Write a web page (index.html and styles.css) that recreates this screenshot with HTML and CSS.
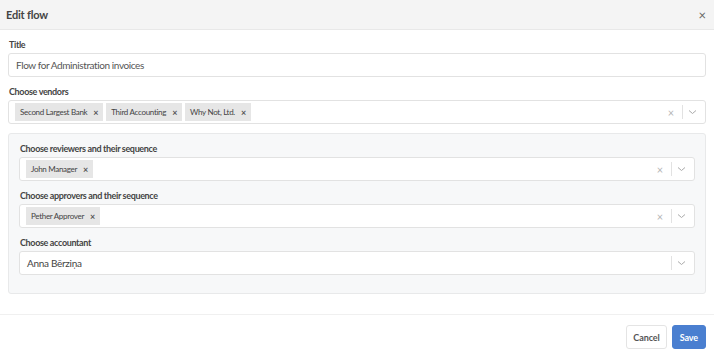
FILE: index.html
```html
<!DOCTYPE html>
<html>

<head>
  <meta charset="utf-8" />
  <title>Edit flow</title>
  <link rel="stylesheet" href="styles.css">
</head>

<body>
  <div class="modal">
    <div class="modal-header">
      <h1>Edit flow</h1>
      <span class="close">&times;</span>
    </div>

    <div class="modal-body">
      <div class="field">
        <label>Title</label>
        <div class="input">Flow for Administration invoices</div>
      </div>

      <div class="field">
        <label>Choose vendors</label>
        <div class="select">
          <div class="values">
            <span class="tag">Second Largest Bank<b>&times;</b></span>
            <span class="tag">Third Accounting<b>&times;</b></span>
            <span class="tag">Why Not, Ltd.<b>&times;</b></span>
          </div>
          <span class="clear">&times;</span>
          <span class="sep"></span>
          <span class="chevron"><svg width="9" height="6" viewBox="0 0 9 6"><path d="M1 1.5l3.5 3 3.5-3" fill="none" stroke="#aaa" stroke-width="1"/></svg></span>
        </div>
      </div>

      <div class="panel">
        <div class="field">
          <label>Choose reviewers and their sequence</label>
          <div class="select">
            <div class="values">
              <span class="tag">John Manager<b>&times;</b></span>
            </div>
            <span class="clear">&times;</span>
            <span class="sep"></span>
            <span class="chevron"><svg width="9" height="6" viewBox="0 0 9 6"><path d="M1 1.5l3.5 3 3.5-3" fill="none" stroke="#aaa" stroke-width="1"/></svg></span>
          </div>
        </div>

        <div class="field">
          <label>Choose approvers and their sequence</label>
          <div class="select">
            <div class="values">
              <span class="tag">Pether Approver<b>&times;</b></span>
            </div>
            <span class="clear">&times;</span>
            <span class="sep"></span>
            <span class="chevron"><svg width="9" height="6" viewBox="0 0 9 6"><path d="M1 1.5l3.5 3 3.5-3" fill="none" stroke="#aaa" stroke-width="1"/></svg></span>
          </div>
        </div>

        <div class="field">
          <label>Choose accountant</label>
          <div class="select">
            <div class="values single">Anna Bērziņa</div>
            <span class="sep"></span>
            <span class="chevron"><svg width="9" height="6" viewBox="0 0 9 6"><path d="M1 1.5l3.5 3 3.5-3" fill="none" stroke="#aaa" stroke-width="1"/></svg></span>
          </div>
        </div>
      </div>
    </div>

    <div class="modal-footer">
      <button class="btn">Cancel</button>
      <button class="btn primary">Save</button>
    </div>
  </div>
</body>

</html>
```

FILE: styles.css
```css
* {
  box-sizing: border-box;
}

body {
  margin: 0;
  background: #fff;
  font-family: "Lato", "Open Sans", sans-serif;
  color: #444;
}

.modal {
  width: 714px;
  height: 358px;
  overflow: hidden;
}

.modal-header {
  height: 30px;
  background: #f4f4f4;
  border-bottom: 1px solid #e8e8e8;
  display: flex;
  align-items: center;
  justify-content: space-between;
  padding: 0 8px 0 6px;
}

.modal-header h1 {
  margin: 0;
  font-size: 11px;
  line-height: 14px;
  letter-spacing: -0.2px;
  font-weight: 700;
  color: #444;
}

.modal-header .close {
  font-size: 13px;
  line-height: 14px;
  color: #666;
}

.modal-body {
  padding: 10px 8px 20px 8px;
}

.field {
  margin-bottom: 10px;
}

.panel .field:last-child {
  margin-bottom: 0;
}

.field label {
  display: block;
  font-size: 9px;
  line-height: 10px;
  letter-spacing: -0.35px;
  font-weight: 700;
  color: #444;
  padding-left: 1px;
  margin-bottom: 3px;
}

.input {
  height: 24px;
  border: 1px solid #e2e2e2;
  border-radius: 3px;
  padding: 0 7px;
  display: flex;
  align-items: center;
  font-size: 10px;
  letter-spacing: -0.4px;
  color: #555;
}

.select {
  height: 24px;
  background: #fff;
  border: 1px solid #e2e2e2;
  border-radius: 3px;
  display: flex;
  align-items: center;
  padding: 0 7px 0 6px;
}

.select .values {
  flex: 1;
  display: flex;
  gap: 3px;
}

.select .values.single {
  font-size: 10px;
  letter-spacing: -0.3px;
  color: #444;
  padding-left: 1px;
}

.tag {
  background: #e6e6e6;
  height: 18px;
  display: flex;
  align-items: center;
  padding: 0 5px;
  font-size: 8px;
  letter-spacing: -0.3px;
  color: #444;
}

.tag b {
  margin-left: 6px;
  font-size: 9px;
  color: #555;
}

.clear {
  color: #b5b5b5;
  font-size: 11px;
  width: 14px;
  text-align: center;
}

.sep {
  width: 1px;
  height: 14px;
  background: #e2e2e2;
  margin: 0 5px 0 4px;
}

.chevron {
  width: 10px;
  display: flex;
  align-items: center;
}

.panel {
  background: #f7f8f9;
  border: 1px solid #e8e9ea;
  border-radius: 3px;
  padding: 10px 10px 18px 10px;
  margin-top: -1px;
}

.modal-footer {
  border-top: 1px solid #f0f0f0;
  display: flex;
  justify-content: flex-end;
  gap: 5px;
  padding: 10px 8px;
}

.btn {
  height: 24px;
  border: 1px solid #e4e4e4;
  border-radius: 3px;
  background: #fff;
  font-family: "Lato", sans-serif;
  font-size: 9px;
  font-weight: 700;
  letter-spacing: -0.1px;
  color: #555;
  padding: 0 6px;
}

.btn.primary {
  background: #4a7fd0;
  border-color: #4a7fd0;
  color: #fff;
  padding: 0 7px;
}
```
